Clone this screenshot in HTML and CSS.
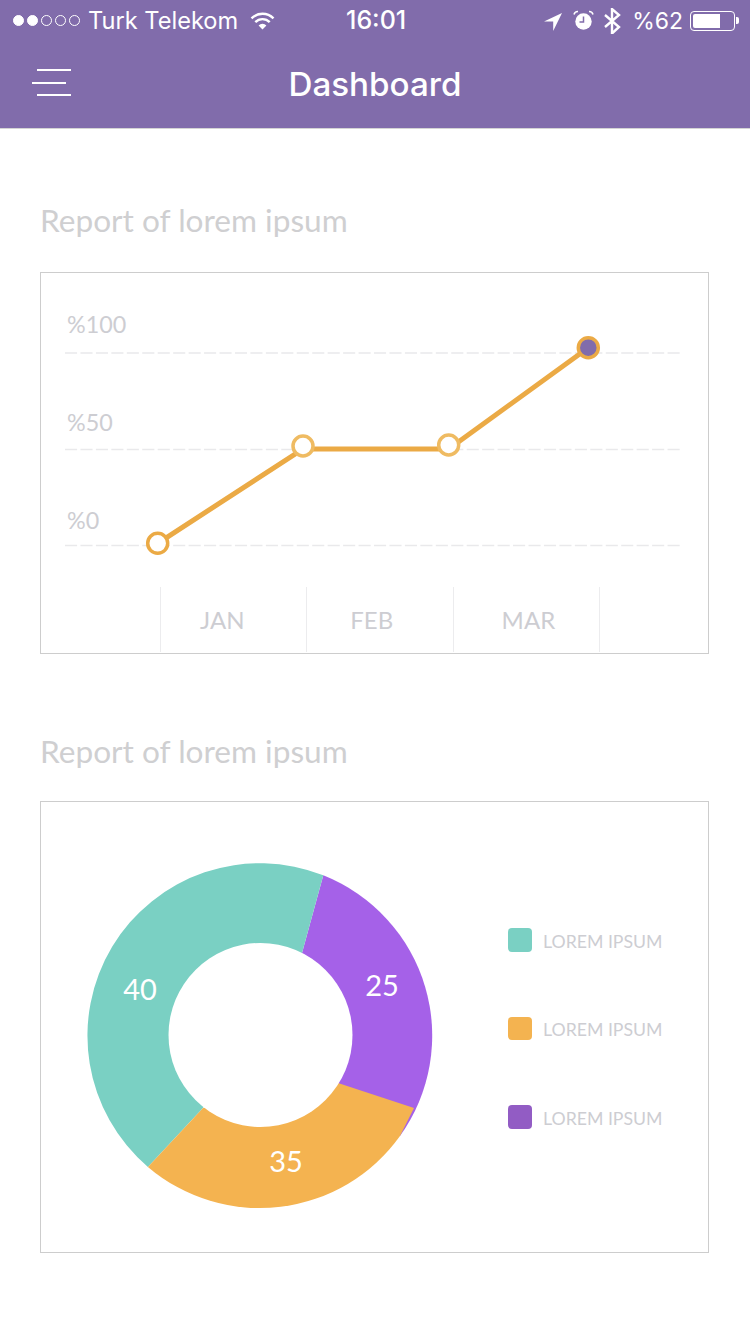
FILE: index.html
```html
<!DOCTYPE html>
<html lang="en">
<head>
<meta charset="utf-8">
<title>Dashboard</title>
<link rel="stylesheet" href="styles.css">
</head>
<body>
<header class="topbar">
  <div class="status">
    <div class="status-left">
      <div class="signal">
        <span class="dot on"></span><span class="dot on"></span><span class="dot"></span><span class="dot"></span><span class="dot"></span>
      </div>
      <span class="carrier">Turk Telekom</span>
      <svg class="wifi" viewBox="0 0 25 18" width="25" height="18">
        <path class="wifi-fill" d="M12.5 17.5 8.6 13.4A5.5 5.5 0 0 1 16.4 13.4Z"/>
        <path class="wifi-arc" d="M5.3 10.2A10 10 0 0 1 19.7 10.2"/>
        <path class="wifi-arc" d="M1.5 6.4A15.5 15.5 0 0 1 23.5 6.4"/>
      </svg>
    </div>
    <span class="time">16:01</span>
    <div class="status-right">
      <svg class="ico-arrow" viewBox="0 0 18 18" width="18" height="18"><path class="wifi-fill" d="M18 0 0 8.5H9.2V18Z"/></svg>
      <svg class="ico-alarm" viewBox="0 0 21 21" width="21" height="21">
        <circle class="wifi-fill" cx="10.5" cy="11.5" r="8.2"/>
        <path class="alarm-hand" d="M10.5 6.5V12H6.5"/>
        <path class="wifi-arc thin" d="M1 4.5A4 4 0 0 1 5 1.5M20 4.5A4 4 0 0 0 16 1.5"/>
      </svg>
      <svg class="ico-bt" viewBox="0 0 17 26" width="17" height="26"><path class="wifi-arc" d="M1 7 15 19 8 25.500V1L15 7 1 19"/></svg>
      <span class="battery-text">%62</span>
      <div class="battery"><span class="battery-fill"></span></div>
      <span class="battery-tip"></span>
    </div>
  </div>
  <div class="navbar">
    <div class="burger"><span class="bar"></span><span class="bar bar-mid"></span><span class="bar"></span></div>
    <h1 class="title">Dashboard</h1>
  </div>
</header>

<main class="content">
  <h2 class="section-title first">Report of lorem ipsum</h2>
  <section class="card line-card">
    <svg class="line-chart" viewBox="41 273 667 314" width="667" height="314">
      <text class="axis" x="67" y="333">%100</text>
      <text class="axis" x="67" y="431">%50</text>
      <text class="axis" x="67" y="529">%0</text>
      <path class="grid" d="M65 353H680M65 449.500H680M65 545.500H680"/>
      <path class="trend" d="M157.700 543.300 303 449H448.700L588.300 347.700"/>
      <circle class="node" cx="157.700" cy="543.300" r="10"/>
      <circle class="node light" cx="303" cy="446" r="10"/>
      <circle class="node light" cx="448.700" cy="445" r="10"/>
      <circle class="node current" cx="588.300" cy="347.700" r="10"/>
    </svg>
    <div class="months">
      <span class="month m-jan">JAN</span>
      <span class="month m-feb">FEB</span>
      <span class="month m-mar">MAR</span>
    </div>
  </section>

  <h2 class="section-title">Report of lorem ipsum</h2>
  <section class="card donut-card">
    <svg class="donut" viewBox="87 863 346 346" width="346" height="346">
      <path class="seg-purple" d="M323.300 875.300A172.500 172.500 0 0 1 400 1136L338 1083 302 953Z"/>
      <path class="seg-teal" d="M323.300 875.300A172.500 172.500 0 0 0 147.900 1166.900L203 1108 302 953Z"/>
      <path class="seg-orange" d="M414 1108 338 1083 203 1108 147.900 1166.900A172.500 172.500 0 0 0 400 1136Z"/>
      <circle class="hole" cx="260.500" cy="1035" r="92"/>
      <text class="num" x="140" y="1000">40</text>
      <text class="num" x="382" y="996">25</text>
      <text class="num" x="286" y="1172">35</text>
    </svg>
    <ul class="legend">
      <li class="legend-row"><span class="swatch teal"></span>LOREM IPSUM</li>
      <li class="legend-row"><span class="swatch orange"></span>LOREM IPSUM</li>
      <li class="legend-row"><span class="swatch violet"></span>LOREM IPSUM</li>
    </ul>
  </section>
</main>
</body>
</html>
```
FILE: styles.css
```css
* { box-sizing: border-box; }
html, body { margin: 0; padding: 0; background: #fff; }
body { width: 750px; height: 1334px; overflow: hidden; font-family: Lato, "Liberation Sans", sans-serif; }

.topbar { height: 129px; background: #816cab; color: #fff; border-bottom: 1px solid #d4d4d4; font-family: Inter, "Liberation Sans", sans-serif; }

.status { position: relative; height: 40px; display: flex; justify-content: space-between; align-items: center; padding: 1px 11px 0 13px; font-size: 23.600px; font-weight: 400; }
.status-left, .status-right, .signal { display: flex; align-items: center; }
.signal { gap: 3px; }
.dot { width: 11px; height: 11px; border-radius: 50%; border: 1px solid #fff; }
.dot.on { background: #fff; }
.carrier { margin-left: 8px; }
.wifi { margin-left: 12px; margin-top: 1px; }
.wifi-fill { fill: #fff; }
.wifi-arc { fill: none; stroke: #fff; stroke-width: 2.400; }
.wifi-arc.thin { stroke-width: 1.500; }
.alarm-hand { fill: none; stroke: #816cab; stroke-width: 1.500; }
.time { position: absolute; left: 346px; top: 6px; line-height: 29px; font-size: 25px; font-weight: 500; }
.ico-arrow { margin-top: 2px; }
.ico-alarm { margin-left: 11px; }
.ico-bt { margin-left: 10px; margin-top: 1px; }
.battery-text { margin-left: 11px; font-size: 23px; }
.battery { width: 45px; height: 20px; margin-left: 7px; padding: 2px; border: 1px solid #fff; border-radius: 4px; display: flex; }
.battery-fill { width: 27px; background: #fff; border-radius: 2px 0 0 2px; }
.battery-tip { width: 3px; height: 7px; margin-left: 1px; background: #fff; border-radius: 0 2px 2px 0; }

.navbar { position: relative; height: 88px; display: flex; justify-content: center; align-items: center; }
.title { margin: 0; font-size: 33.200px; font-weight: 500; line-height: 40px; }
.burger { position: absolute; left: 32px; top: 29px; width: 39px; display: flex; flex-direction: column; align-items: flex-end; gap: 10.500px; }
.bar { width: 34px; height: 2px; background: #fff; }
.bar-mid { align-self: flex-start; }

.content { padding: 0 41px 0 40px; }
.section-title { margin: 77px 0 30px; font-size: 31.600px; line-height: 40px; font-weight: 400; color: #cfcfd1; }
.section-title.first { margin: 71px 0 32px; }

.card { border: 1px solid #cdcdcd; }
.line-card { height: 382px; }
.line-chart { display: block; }
.axis { font-size: 23.300px; fill: #cdcdd2; }
.grid { fill: none; stroke: #e9e9eb; stroke-width: 1.500; stroke-dasharray: 12.100 3.350; }
.trend { fill: none; stroke: #ebaa45; stroke-width: 5px; }
.node { fill: #fff; stroke: #ebaa45; stroke-width: 3.500; }
.node.light { stroke: #efbb62; }
.node.current { fill: #816cab; }

.months { display: flex; height: 65px; margin-left: 119px; width: 440px; border-right: 1px solid #ececee; font-size: 24px; line-height: 66px; color: #cdcdd2; }
.month { width: 146.300px; border-left: 1px solid #ececee; }
.m-jan { padding-left: 39px; }
.m-feb { padding-left: 43px; }
.m-mar { padding-left: 48px; }

.donut-card { height: 452px; display: flex; padding: 61px 0 0 46px; }
.donut { display: block; flex: none; }
.seg-teal { fill: #7ad0c3; }
.seg-purple { fill: #a561e8; }
.seg-orange { fill: #f4b350; }
.hole { fill: #fff; }
.num { font-size: 29px; fill: #fff; text-anchor: middle; }

.legend { list-style: none; margin: 66px 0 0 75px; padding: 0; display: flex; flex-direction: column; gap: 64.500px; }
.legend-row { height: 24px; display: flex; align-items: center; gap: 11.500px; font-size: 17.700px; color: #cdcdd2; white-space: nowrap; }
.swatch { width: 23.500px; height: 23.500px; margin-top: -2px; border-radius: 4px; }
.swatch.teal { background: #7ad0c3; }
.swatch.orange { background: #f4b350; }
.swatch.violet { background: #925cc4; }
```
